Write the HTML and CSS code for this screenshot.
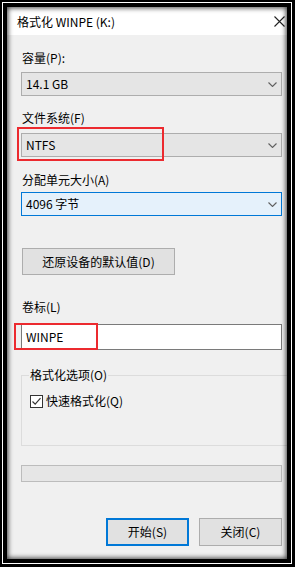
FILE: index.html
```html
<!DOCTYPE html>
<html>
<head>
<meta charset="utf-8">
<link rel="stylesheet" href="styles.css">
</head>
<body>
<div class="frame">
  <div class="frame-white">
    <div class="frame-black">
      <div class="win">
        <div class="titlebar">
          <span class="title">格式化 WINPE (K:)</span>
          <svg class="close" width="11" height="11" viewBox="0 0 11 11"><path d="M0.5 0.5 L10.5 10.5 M10.5 0.5 L0.5 10.5" stroke="#222" stroke-width="1.1" fill="none"/></svg>
        </div>
        <div class="body">
          <div class="label l1">容量(P):</div>
          <div class="combo c1"><span>14.1 GB</span><svg class="chev" width="9" height="5" viewBox="0 0 9 5"><path d="M0.5 0.5 L4.5 4.5 L8.5 0.5" stroke="#606060" stroke-width="1.1" fill="none"/></svg></div>
          <div class="label l2">文件系统(F)</div>
          <div class="combo c2"><span>NTFS</span><svg class="chev" width="9" height="5" viewBox="0 0 9 5"><path d="M0.5 0.5 L4.5 4.5 L8.5 0.5" stroke="#606060" stroke-width="1.1" fill="none"/></svg><div class="red red-ntfs"></div></div>
          <div class="label l3">分配单元大小(A)</div>
          <div class="combo focus c3"><span>4096 字节</span><svg class="chev" width="9" height="5" viewBox="0 0 9 5"><path d="M0.5 0.5 L4.5 4.5 L8.5 0.5" stroke="#606060" stroke-width="1.1" fill="none"/></svg></div>
          <div class="btn restore">还原设备的默认值(D)</div>
          <div class="label l4">卷标(L)</div>
          <div class="input"><span>WINPE</span><div class="red red-label"></div></div>
          <fieldset class="group">
            <legend>格式化选项(O)</legend>
            <div class="check-row">
              <svg class="checkbox" width="13" height="13" viewBox="0 0 13 13"><rect x="0.5" y="0.5" width="12" height="12" fill="#fff" stroke="#333"/><path d="M2.5 6.5 L5.2 9.2 L10.5 3.2" stroke="#333" stroke-width="1.2" fill="none"/></svg>
              <span>快速格式化(Q)</span>
            </div>
          </fieldset>
          <div class="progress"></div>
          <div class="buttons">
            <div class="btn default">开始(S)</div>
            <div class="btn">关闭(C)</div>
          </div>
        </div>
      </div>
    </div>
  </div>
</div>
</body>
</html>
```
FILE: styles.css
```css
* { box-sizing: border-box; }
html, body { margin: 0; padding: 0; background: #fff; }
body {
  width: 298px; height: 570px;
  font-family: "Noto Sans CJK SC", "Noto Sans", sans-serif;
  font-size: 12px; color: #000;
}
.frame {
  width: 295px; height: 567px;
  background: #000;
  padding: 2px 3px 3px 2px;
}
.frame-white {
  width: 100%; height: 100%;
  border: 1px solid #fff;
}
.frame-black {
  width: 100%; height: 100%;
  border: 4px solid #000;
}
.win {
  position: relative;
  width: 100%; height: 100%;
  background: #f0f0f0;
  display: flex; flex-direction: column;
  overflow: hidden;
}
.win::after {
  content: "";
  position: absolute; inset: 0;
  box-shadow: inset 0 0 5px 1px rgba(0,0,0,0.75);
  pointer-events: none;
}
.titlebar {
  height: 28px;
  background: #fff;
  display: flex; align-items: center; justify-content: space-between;
  padding: 1px 2px 0 10px;
  flex: none;
}
.title { font-size: 12px; line-height: 16px; color: #000; }
.body {
  display: flex; flex-direction: column;
  padding: 0 5px 0 14px;
}
.label { line-height: 16px; height: 16px; padding-left: 1px; }
.l1 { margin-top: 15px; }
.l2 { margin-top: 14px; }
.l3 { margin-top: 15px; }
.l4 { margin-top: 24px; }
.combo {
  position: relative;
  height: 24px;
  background: #e5e5e5;
  border: 1px solid #adadad;
  display: flex; align-items: center; justify-content: space-between;
  padding: 0 4px 0 4px;
}
.combo span { line-height: 16px; }
.c1 { margin-top: 6px; }
.c2 { margin-top: 7px; }
.c3 { margin-top: 4px; }
.combo.focus { background: #e5f1fb; border-color: #0078d7; }
.red {
  position: absolute;
  border: 2px solid #ec2a2f;
  pointer-events: none;
}
.red-ntfs { left: -5px; top: -7px; width: 147px; height: 34px; }
.red-label { left: -8px; top: -2px; width: 84px; height: 27px; }
.btn {
  height: 27px;
  background: #e1e1e1;
  border: 1px solid #adadad;
  display: flex; align-items: center; justify-content: center;
  line-height: 16px;
}
.restore { margin-top: 32px; margin-left: 1px; width: 153px; }
.input {
  position: relative;
  margin-top: 9px;
  height: 26px;
  background: #fff;
  border: 1px solid #7a7a7a;
  display: flex; align-items: center;
  padding-left: 4px;
}
.input span { line-height: 16px; }
.group {
  margin: 17px -10px 0 0;
  padding: 0;
  height: 79px;
  border: 1px solid #dcdcdc;
  min-width: 0;
}
.group legend {
  margin-left: 7px;
  padding: 0 1px;
  line-height: 16px;
}
.check-row {
  display: flex; align-items: center;
  margin-top: 10px; margin-left: 8px;
  gap: 3px;
}
.check-row span { line-height: 16px; }
.progress {
  margin-top: 19px;
  height: 17px;
  background: #e6e6e6;
  border: 1px solid #bcbcbc;
}
.buttons {
  margin-top: 36px;
  display: flex; justify-content: flex-end; gap: 10px;
}
.buttons .btn { width: 83px; height: 28px; }
.btn.default { border: 2px solid #0078d7; }
```
